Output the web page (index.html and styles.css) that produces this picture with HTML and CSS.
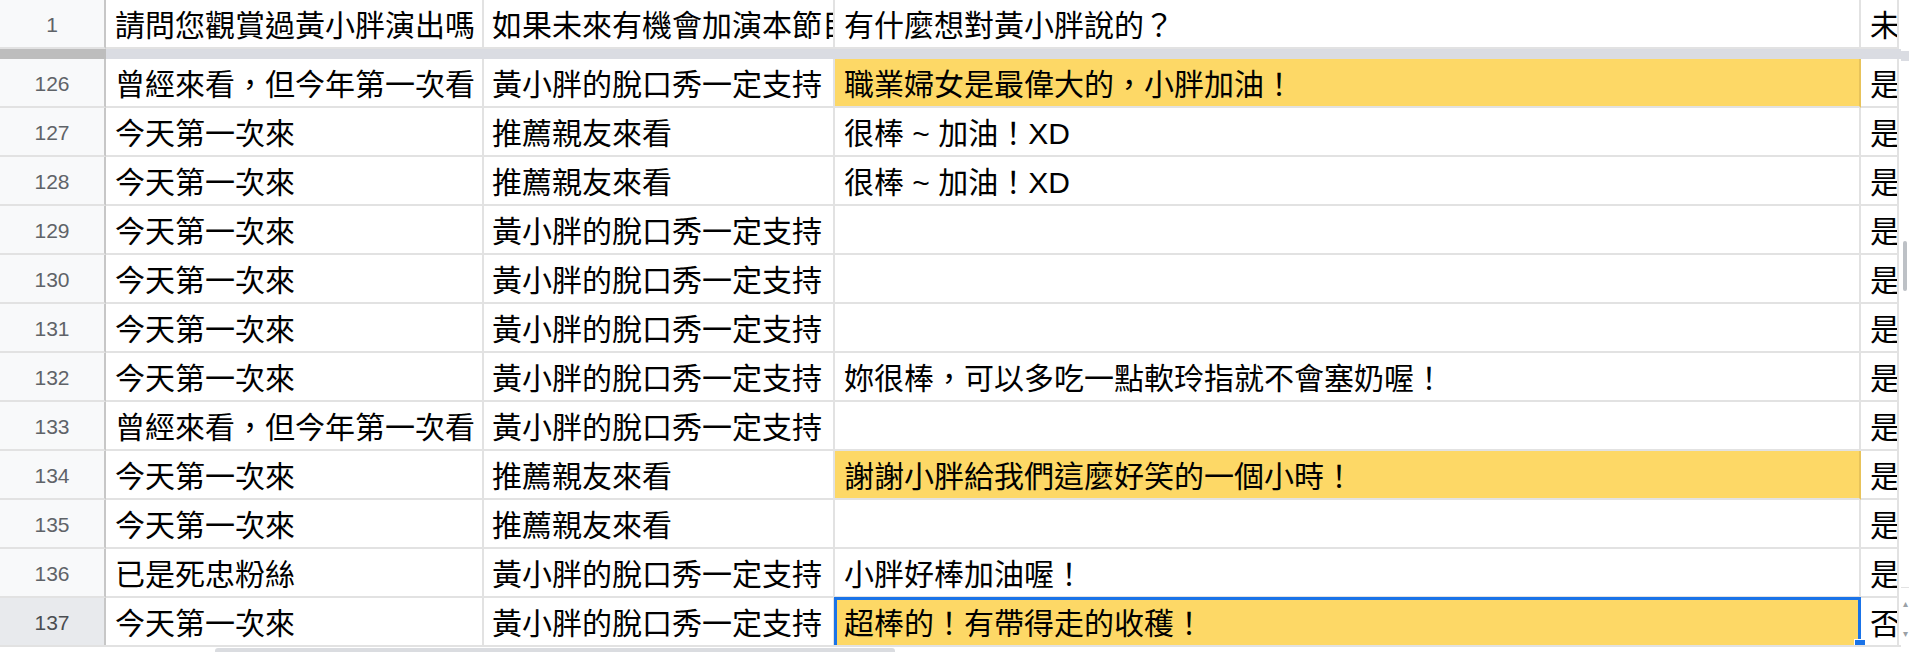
FILE: index.html
```html
<!DOCTYPE html>
<html lang="zh-TW">
<head>
<meta charset="utf-8">
<title>Sheet</title>
<link rel="stylesheet" href="styles.css">
</head>
<body>
<div class="app">
  <div class="grid-area">
    <div class="topline"></div>
    <div class="row">
      <div class="rh">1</div>
      <div class="cell ca">請問您觀賞過黃小胖演出嗎</div>
      <div class="cell cb">如果未來有機會加演本節目</div>
      <div class="cell cc">有什麼想對黃小胖說的？</div>
      <div class="cell cd">未來</div>
    </div>
    <div class="freeze"><div class="freeze-rh"></div><div class="freeze-cells"></div></div>
    <div class="row">
      <div class="rh">126</div>
      <div class="cell ca">曾經來看，但今年第一次看</div>
      <div class="cell cb">黃小胖的脫口秀一定支持</div>
      <div class="cell cc hl">職業婦女是最偉大的，小胖加油！</div>
      <div class="cell cd">是</div>
    </div>
    <div class="row">
      <div class="rh">127</div>
      <div class="cell ca">今天第一次來</div>
      <div class="cell cb">推薦親友來看</div>
      <div class="cell cc">很棒 ~ 加油！XD</div>
      <div class="cell cd">是</div>
    </div>
    <div class="row">
      <div class="rh">128</div>
      <div class="cell ca">今天第一次來</div>
      <div class="cell cb">推薦親友來看</div>
      <div class="cell cc">很棒 ~ 加油！XD</div>
      <div class="cell cd">是</div>
    </div>
    <div class="row">
      <div class="rh">129</div>
      <div class="cell ca">今天第一次來</div>
      <div class="cell cb">黃小胖的脫口秀一定支持</div>
      <div class="cell cc"></div>
      <div class="cell cd">是</div>
    </div>
    <div class="row">
      <div class="rh">130</div>
      <div class="cell ca">今天第一次來</div>
      <div class="cell cb">黃小胖的脫口秀一定支持</div>
      <div class="cell cc"></div>
      <div class="cell cd">是</div>
    </div>
    <div class="row">
      <div class="rh">131</div>
      <div class="cell ca">今天第一次來</div>
      <div class="cell cb">黃小胖的脫口秀一定支持</div>
      <div class="cell cc"></div>
      <div class="cell cd">是</div>
    </div>
    <div class="row">
      <div class="rh">132</div>
      <div class="cell ca">今天第一次來</div>
      <div class="cell cb">黃小胖的脫口秀一定支持</div>
      <div class="cell cc">妳很棒，可以多吃一點軟玲指就不會塞奶喔！</div>
      <div class="cell cd">是</div>
    </div>
    <div class="row">
      <div class="rh">133</div>
      <div class="cell ca">曾經來看，但今年第一次看</div>
      <div class="cell cb">黃小胖的脫口秀一定支持</div>
      <div class="cell cc"></div>
      <div class="cell cd">是</div>
    </div>
    <div class="row">
      <div class="rh">134</div>
      <div class="cell ca">今天第一次來</div>
      <div class="cell cb">推薦親友來看</div>
      <div class="cell cc hl">謝謝小胖給我們這麼好笑的一個小時！</div>
      <div class="cell cd">是</div>
    </div>
    <div class="row">
      <div class="rh">135</div>
      <div class="cell ca">今天第一次來</div>
      <div class="cell cb">推薦親友來看</div>
      <div class="cell cc"></div>
      <div class="cell cd">是</div>
    </div>
    <div class="row">
      <div class="rh">136</div>
      <div class="cell ca">已是死忠粉絲</div>
      <div class="cell cb">黃小胖的脫口秀一定支持</div>
      <div class="cell cc">小胖好棒加油喔！</div>
      <div class="cell cd">是</div>
    </div>
    <div class="row last">
      <div class="rh sel">137</div>
      <div class="cell ca">今天第一次來</div>
      <div class="cell cb">黃小胖的脫口秀一定支持</div>
      <div class="cell cc hl selected">超棒的！有帶得走的收穫！<span class="handle"></span></div>
      <div class="cell cd">否</div>
    </div>
    <div class="hscroll"><div class="hthumb"></div></div>
  </div>
  <div class="vscroll">
    <div class="vtop"></div>
    <div class="vtrack"></div>
    <div class="vbody"><div class="vthumb"></div></div>
    <div class="vbtns"><span class="arrow">▴</span><span class="arrow">▾</span></div>
  </div>
</div>
</body>
</html>
```

FILE: styles.css
```css
html, body {
  margin: 0;
  padding: 0;
  background: #ffffff;
  overflow: hidden;
}

.app {
  display: flex;
  width: 1909px;
  height: 652px;
  font-family: "Liberation Sans", "Noto Sans CJK TC", sans-serif;
  color: #000;
}

.grid-area {
  width: 1901px;
  display: flex;
  flex-direction: column;
}

.topline {
  height: 2px;
  background: #c4c4c4;
}

.row {
  display: flex;
  height: 49px;
  flex: none;
}

.row .rh,
.row .cell {
  border-bottom: 2px solid #e2e2e2;
}

.rh {
  width: 106px;
  flex: none;
  box-sizing: border-box;
  background: #f8f9fa;
  border-right: 2px solid #c7c7c7;
  display: flex;
  align-items: center;
  justify-content: center;
  font-family: "Liberation Sans", Arial, sans-serif;
  font-size: 21px;
  color: #5f6368;
  padding-top: 3px;
}

.rh.sel {
  background: #e8eaed;
  color: #4a4d51;
}

.cell {
  flex: none;
  box-sizing: border-box;
  border-right: 2px solid #e2e2e2;
  display: flex;
  align-items: center;
  padding: 4px 0 0 9px;
  font-size: 30px;
  line-height: 30px;
  white-space: pre;
  overflow: hidden;
  position: relative;
}

.ca { width: 378px; }
.cb { width: 351px; padding-left: 8px; }
.cc { width: 1026px; padding-left: 9px; }
.cd { width: 38px; padding-left: 9px; }

.hl {
  background: #fdd866;
  border-right-color: #e8c35a;
  border-bottom-color: #e8c35a;
}

.row:first-child .rh { height: 48px; }

.freeze {
  display: flex;
  height: 10px;
  flex: none;
}

.freeze-rh {
  width: 106px;
  background: #bdbdbd;
}

.freeze-cells {
  flex: 1;
  background: #dadce2;
}

.row.last {
  height: 47px;
}

.row.last .rh,
.row.last .cell {
  border-bottom: none;
}

.selected {
  overflow: visible;
}

.selected::after {
  content: "";
  position: absolute;
  left: -1px;
  top: -1px;
  right: -2px;
  bottom: 0;
  border: 3px solid #1a73e8;
  border-bottom: none;
  pointer-events: none;
}

.handle {
  position: absolute;
  right: -7px;
  bottom: -6px;
  width: 10px;
  height: 10px;
  background: #1a73e8;
  border: 1px solid #ffffff;
  z-index: 2;
}

.hscroll {
  position: relative;
  z-index: 3;
  height: 6px;
  border-top: 2px solid #e2e2e2;
  background: #ffffff;
  padding-left: 215px;
}

.hthumb {
  width: 680px;
  height: 6px;
  margin-top: 1px;
  border-radius: 4px;
  background: #dadce0;
}

.vscroll {
  width: 8px;
  display: flex;
  flex-direction: column;
  background: #ffffff;
}

.vtop {
  height: 51px;
  flex: none;
}

.vtrack {
  height: 10px;
  flex: none;
  background: #dadce2;
}

.vbody {
  flex: 1;
  padding-top: 180px;
}

.vthumb {
  width: 4px;
  height: 50px;
  margin-left: 2px;
  border-radius: 2px;
  background: #bdc1c6;
}

.vbtns {
  height: 60px;
  flex: none;
  display: flex;
  flex-direction: column;
  justify-content: space-around;
  align-items: center;
  border-top: 1px solid #e2e2e2;
  font-size: 10px;
  color: #9aa0a6;
  margin-bottom: 4px;
}
```
